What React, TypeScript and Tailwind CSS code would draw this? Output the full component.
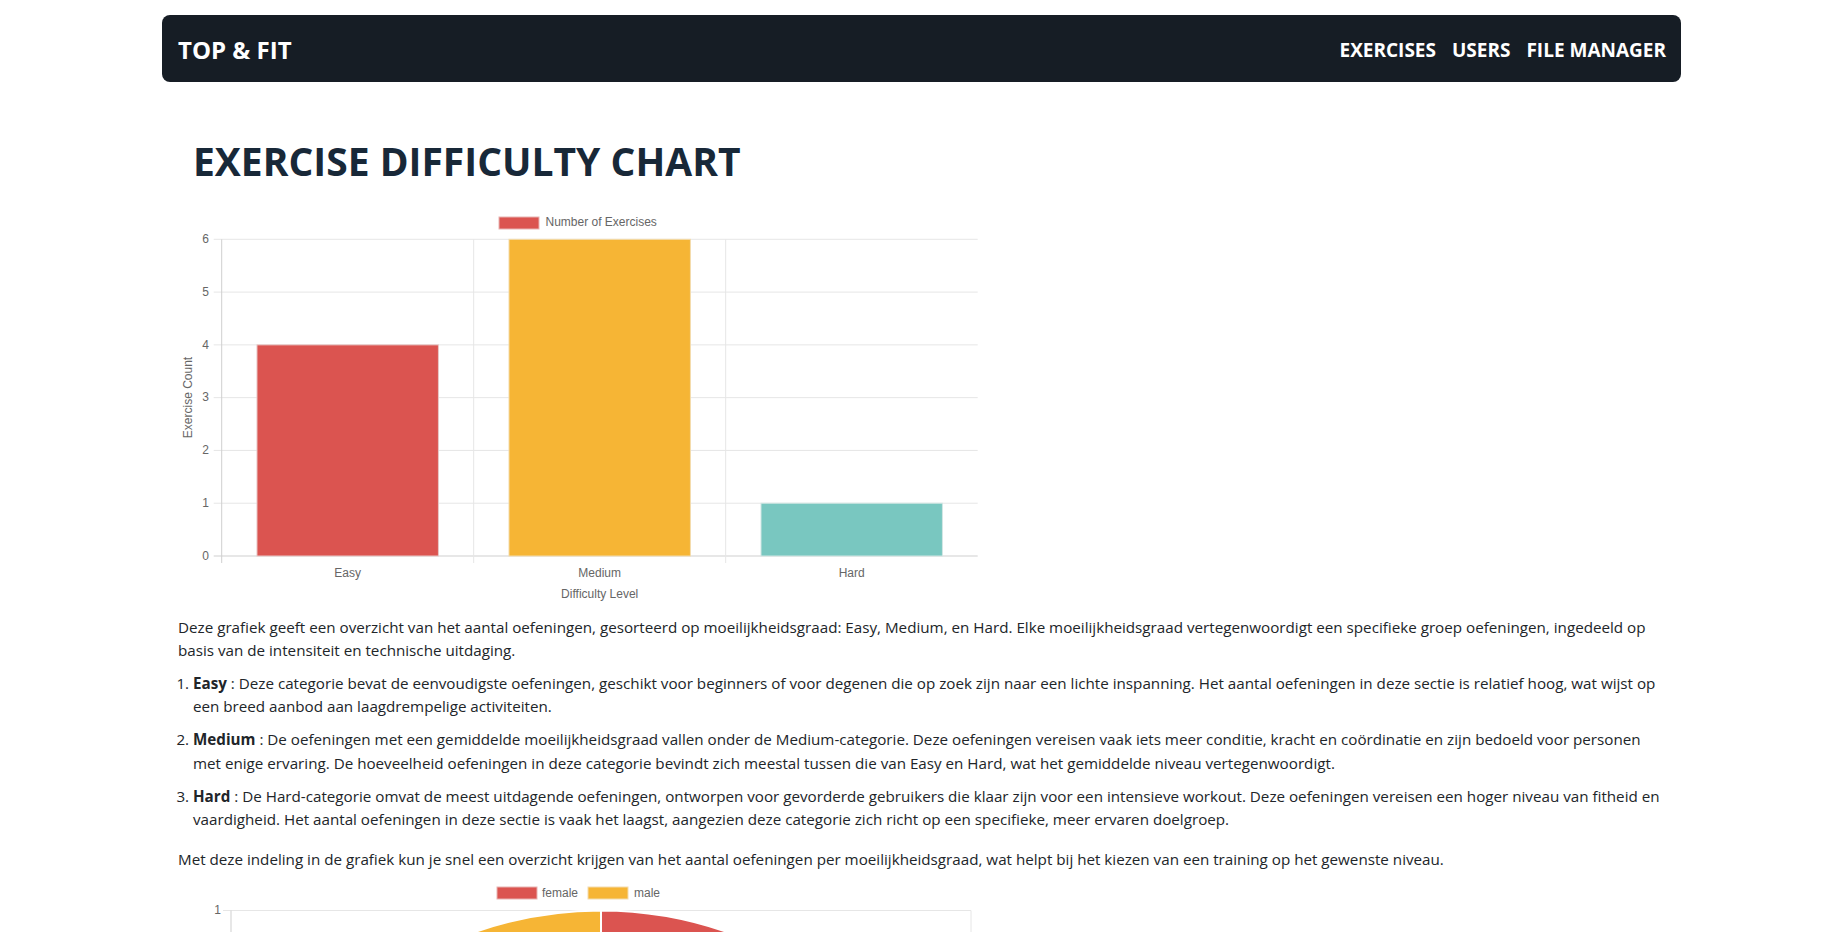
import React from "react";

const GRID = "#e6e6e6";
const AXIS = "#cfcfcf";
const LABEL = "#666666";
const RED = "#db5450";
const YELLOW = "#f6b535";
const TEAL = "#79c7c0";

function DifficultyChart() {
  const top = 34.3;
  const bottom = 351;
  const left = 43.7;
  const right = 799.7;
  const unit = (bottom - top) / 6;
  const cat = (right - left) / 3;
  const bars = [
    { label: "Easy", value: 4, color: RED, stroke: "#e8c9c8" },
    { label: "Medium", value: 6, color: YELLOW, stroke: "#f3dcae" },
    { label: "Hard", value: 1, color: TEAL, stroke: "#d3e6e4" },
  ];
  return (
    <svg width={805} height={400} className="block" style={{ fontFamily: "'Liberation Sans', Arial, sans-serif" }}>
      <rect x={321} y={12} width={40} height={12} fill={RED} stroke="#e7b3b2" strokeWidth={1} />
      <text x={367.5} y={18} fontSize={12} fill={LABEL} dominantBaseline="middle">Number of Exercises</text>
      {[0, 1, 2, 3, 4, 5, 6].map((k) => {
        const y = bottom - k * unit;
        return (
          <g key={k}>
            <line x1={35.7} x2={right} y1={y} y2={y} stroke={k === 0 ? AXIS : GRID} strokeWidth={1} />
            <text x={31} y={y + 0.5} fontSize={12} fill={LABEL} textAnchor="end" dominantBaseline="middle">{k}</text>
          </g>
        );
      })}
      {[0, 1, 2].map((i) => (
        <line key={i} x1={left + i * cat} x2={left + i * cat} y1={top} y2={bottom + 7} stroke={i === 0 ? AXIS : GRID} strokeWidth={1} />
      ))}
      {bars.map((b, i) => {
        const w = cat * 0.72;
        const x = left + i * cat + (cat - w) / 2;
        const h = b.value * unit;
        return (
          <g key={b.label}>
            <rect x={x} y={bottom - h} width={w} height={h} fill={b.color} stroke={b.stroke} strokeWidth={1} />
            <text x={left + i * cat + cat / 2} y={368.5} fontSize={12} fill={LABEL} textAnchor="middle" dominantBaseline="middle">{b.label}</text>
          </g>
        );
      })}
      <text x={left + (right - left) / 2} y={389.5} fontSize={12} fill={LABEL} textAnchor="middle" dominantBaseline="middle">Difficulty Level</text>
      <text x={0} y={0} fontSize={12} fill={LABEL} textAnchor="middle" dominantBaseline="middle" transform="translate(11 192.5) rotate(-90)">Exercise Count</text>
    </svg>
  );
}

function GenderChart() {
  const top = 33.5;
  const left = 53;
  const right = 793;
  const cx = (left + right) / 2;
  const r = 380;
  const cy = top + r;
  return (
    <svg width={805} height={60} className="block" style={{ fontFamily: "'Liberation Sans', Arial, sans-serif" }}>
      <rect x={319} y={10} width={40} height={12} fill={RED} stroke="#e7b3b2" strokeWidth={1} />
      <text x={364} y={16.5} fontSize={12} fill={LABEL} dominantBaseline="middle">female</text>
      <rect x={410} y={10} width={40} height={12} fill={YELLOW} stroke="#f3dcae" strokeWidth={1} />
      <text x={456} y={16.5} fontSize={12} fill={LABEL} dominantBaseline="middle">male</text>
      <line x1={45} x2={right} y1={top} y2={top} stroke={GRID} strokeWidth={1} />
      <line x1={left} x2={left} y1={top} y2={60} stroke={AXIS} strokeWidth={1} />
      <line x1={right} x2={right} y1={top} y2={60} stroke={GRID} strokeWidth={1} />
      <text x={43} y={top} fontSize={12} fill={LABEL} textAnchor="end" dominantBaseline="middle">1</text>
      <path d={`M ${cx} ${cy - r} A ${r} ${r} 0 0 1 ${cx} ${cy + r} Z`} fill={RED} stroke="#ffffff" strokeWidth={2} />
      <path d={`M ${cx} ${cy + r} A ${r} ${r} 0 0 1 ${cx} ${cy - r} Z`} fill={YELLOW} stroke="#ffffff" strokeWidth={2} />
    </svg>
  );
}

export default function App() {
  return (
    <div className="h-[932px] overflow-hidden bg-white font-['Open_Sans',sans-serif] text-[#212529]">
      <div className="ml-[162px] w-[1519px] pt-[15px]">
        <nav className="flex h-[67px] items-center justify-between rounded-lg bg-[#161d25] pl-[16px] pr-[15px] pt-[3px]">
          <span className="text-[24px] font-bold text-white">TOP &amp; FIT</span>
          <div className="flex items-center gap-[16px] text-[19px] font-bold text-white">
            <a>EXERCISES</a>
            <a>USERS</a>
            <a>FILE MANAGER</a>
          </div>
        </nav>

        <main className="px-4">
          <h1 className="ml-[15px] mt-[55px] text-[39px] font-bold leading-[48px] text-[#182838]">EXERCISE DIFFICULTY CHART</h1>

          <div className="mt-[20px]">
            <DifficultyChart />
          </div>

          <div className="mt-[11px] text-[15.2px] leading-[23.4px]">
            <p>
              Deze grafiek geeft een overzicht van het aantal oefeningen, gesorteerd op moeilijkheidsgraad: Easy, Medium, en Hard. Elke moeilijkheidsgraad vertegenwoordigt een specifieke groep oefeningen, ingedeeld op basis van de intensiteit en technische uitdaging.
            </p>
            <ol className="mt-[9px] list-decimal space-y-[9.6px] pl-[15px]">
              <li>
                <strong>Easy</strong> : Deze categorie bevat de eenvoudigste oefeningen, geschikt voor beginners of voor degenen die op zoek zijn naar een lichte inspanning. Het aantal oefeningen in deze sectie is relatief hoog, wat wijst op een breed aanbod aan laagdrempelige activiteiten.
              </li>
              <li>
                <strong>Medium</strong> : De oefeningen met een gemiddelde moeilijkheidsgraad vallen onder de Medium-categorie. Deze oefeningen vereisen vaak iets meer conditie, kracht en coördinatie en zijn bedoeld voor personen met enige ervaring. De hoeveelheid oefeningen in deze categorie bevindt zich meestal tussen die van Easy en Hard, wat het gemiddelde niveau vertegenwoordigt.
              </li>
              <li>
                <strong>Hard</strong> : De Hard-categorie omvat de meest uitdagende oefeningen, ontworpen voor gevorderde gebruikers die klaar zijn voor een intensieve workout. Deze oefeningen vereisen een hoger niveau van fitheid en vaardigheid. Het aantal oefeningen in deze sectie is vaak het laagst, aangezien deze categorie zich richt op een specifieke, meer ervaren doelgroep.
              </li>
            </ol>
            <p className="mt-[16.5px]">
              Met deze indeling in de grafiek kun je snel een overzicht krijgen van het aantal oefeningen per moeilijkheidsgraad, wat helpt bij het kiezen van een training op het gewenste niveau.
            </p>
          </div>

          <div className="mt-[6px]">
            <GenderChart />
          </div>
        </main>
      </div>
    </div>
  );
}
